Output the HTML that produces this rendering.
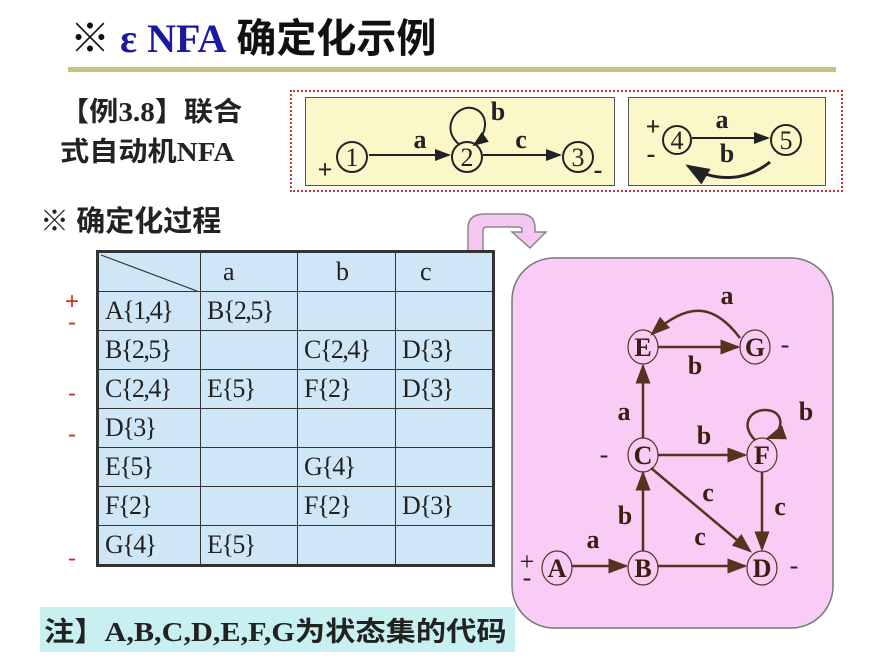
<!DOCTYPE html>
<html><head><meta charset="utf-8"><style>
body{margin:0;width:887px;height:669px;background:#fff;position:relative;overflow:hidden;font-family:"Liberation Serif","Noto Serif CJK SC",serif}
.a{position:absolute;white-space:nowrap}
.cj{font-family:"Liberation Serif","Noto Sans CJK SC",sans-serif;font-weight:bold}
table{position:absolute;left:96px;top:250px;border-collapse:collapse;table-layout:fixed;width:399px;background:#cfe6f7;border:3px solid #333}
td{border:1.5px solid #333;height:38px;padding:0 0 0 6px;font-size:26px;letter-spacing:-1.5px;color:#222;font-family:"Liberation Serif",serif;white-space:nowrap;overflow:hidden}
</style></head><body>
<div class="a cj" style="left:70px;top:6px;font-size:40px;color:#111">※ <span style="color:#1a1aa0;font-family:'Liberation Serif',serif">ε NFA</span> 确定化示例</div>
<div class="a" style="left:68px;top:67px;width:768px;height:5px;background:#c9c27e"></div>
<div class="a cj" style="left:60px;top:92px;font-size:27px;line-height:40px;color:#222;transform:scaleX(1.08);transform-origin:0 0">【例3.8】联合<br>式自动机NFA</div>
<div class="a" style="left:290px;top:90px;width:549px;height:98px;border:2px dotted #c33"></div>
<div class="a" style="left:305px;top:97px;width:308px;height:87px;background:#fbf7c8;border:1.5px solid #555"></div>
<div class="a" style="left:628px;top:97px;width:196px;height:87px;background:#fbf7c8;border:1.5px solid #555"></div>
<svg class="a" style="left:0;top:0" width="887" height="669">
<defs><marker id="m" markerWidth="8" markerHeight="8" refX="7" refY="4" orient="auto"><path d="M0,1L8,4L0,7z" fill="#222"/></marker>
<marker id="n" markerWidth="8" markerHeight="8" refX="7" refY="4" orient="auto"><path d="M0,1L8,4L0,7z" fill="#5a3020"/></marker></defs>
<g fill="none" stroke="#222" stroke-width="2" font-family="Liberation Serif" font-size="24">
<circle cx="352" cy="157" r="15"/><circle cx="467" cy="157" r="15"/><circle cx="578" cy="157" r="15"/>
<line x1="369" y1="155" x2="449" y2="155" marker-end="url(#m)"/>
<line x1="483" y1="155" x2="560" y2="155" marker-end="url(#m)"/>
<path d="M460,145 C440,130 455,105 472,108 C490,112 488,135 474,145" marker-end="url(#m)"/>
<circle cx="677" cy="140" r="14"/><circle cx="786" cy="140" r="15"/>
<line x1="692" y1="138" x2="768" y2="138" marker-end="url(#m)"/>
<path d="M770,162 C745,182 715,182 688,166" stroke-width="3" marker-end="url(#m)"/>
</g>
<g font-family="Liberation Serif" fill="#222" font-size="26" text-anchor="middle">
<text x="352" y="166">1</text><text x="467" y="166">2</text><text x="578" y="166">3</text>
<text x="677" y="149">4</text><text x="786" y="149">5</text>
<g font-weight="bold" font-size="26"><text x="420" y="148">a</text><text x="498" y="120">b</text><text x="521" y="148">c</text><text x="722" y="128">a</text><text x="727" y="162">b</text>
<text x="325" y="178">+</text><text x="598" y="178">-</text><text x="653" y="135">+</text><text x="651" y="162">-</text></g>
</g>
<path d="M468,252 L468,228 Q468,214 485,214 L520,214 Q535,214 535,228 L535,232 L546,232 L530,248 L512,232 L522,232 L522,230 Q522,227 518,227 L487,227 Q483,227 483,231 L483,252 Z" fill="#f4c6f0" stroke="#888" stroke-width="1.5"/>
<rect x="512" y="258" width="321" height="370" rx="42" fill="#f8ccf4" stroke="#777" stroke-width="1.5"/>
<g fill="none" stroke="#5a3020" stroke-width="2.5">
<line x1="658" y1="347" x2="738" y2="347" marker-end="url(#n)"/>
<path d="M740,338 C715,305 690,300 652,334" marker-end="url(#n)"/>
<line x1="643" y1="438" x2="643" y2="366" marker-end="url(#n)"/>
<line x1="658" y1="455" x2="745" y2="455" marker-end="url(#n)"/>
<line x1="651" y1="468" x2="750" y2="551" marker-end="url(#n)"/>
<line x1="762" y1="472" x2="762" y2="549" marker-end="url(#n)"/>
<line x1="643" y1="551" x2="643" y2="473" marker-end="url(#n)"/>
<line x1="572" y1="566" x2="626" y2="566" marker-end="url(#n)"/>
<line x1="658" y1="566" x2="745" y2="566" marker-end="url(#n)"/>
<path d="M755,440 C740,425 750,410 765,410 C785,410 785,432 768,438" marker-end="url(#n)"/>
</g>
<g fill="none" stroke="#5a3020" stroke-width="1.2">
<ellipse cx="643" cy="347" rx="15" ry="17"/><ellipse cx="755" cy="347" rx="15" ry="17"/>
<ellipse cx="643" cy="455" rx="15" ry="17"/><ellipse cx="762" cy="455" rx="15" ry="17"/>
<ellipse cx="557" cy="568" rx="15" ry="17"/><ellipse cx="643" cy="568" rx="15" ry="17"/><ellipse cx="762" cy="568" rx="15" ry="17"/>
</g>
<g font-family="Liberation Serif" font-weight="bold" fill="#3a2010" font-size="26" text-anchor="middle">
<text x="643" y="356">E</text><text x="755" y="356">G</text><text x="643" y="464">C</text><text x="762" y="464">F</text>
<text x="557" y="577">A</text><text x="643" y="577">B</text><text x="762" y="577">D</text>
<text x="727" y="304">a</text><text x="695" y="374">b</text><text x="624" y="420">a</text><text x="704" y="444">b</text><text x="806" y="420">b</text>
<text x="708" y="501">c</text><text x="780" y="515">c</text><text x="625" y="524">b</text><text x="593" y="548">a</text><text x="700" y="545">c</text>
<g font-weight="normal" fill="#222"><text x="527" y="570">+</text><text x="527" y="586">-</text><text x="785" y="353">-</text><text x="794" y="574">-</text><text x="604" y="463">-</text></g>
</g>
<g font-family="Liberation Sans" fill="#d03020" font-size="24" text-anchor="middle">
<text x="72" y="309">+</text><text x="72" y="330">-</text><text x="72" y="401">-</text><text x="72" y="442">-</text><text x="72" y="566">-</text>
</g>
</svg>
<div class="a cj" style="left:40px;top:198px;font-size:29px;color:#222">※ 确定化过程</div>
<table>
<colgroup><col style="width:103px"><col style="width:97px"><col style="width:98px"><col style="width:98px"></colgroup>
<tr><td style="padding:0"><svg width="103" height="38" style="display:block"><line x1="2" y1="2" x2="98" y2="38" stroke="#333" stroke-width="1.2"/></svg></td><td style="padding-left:22px">a</td><td style="padding-left:38px">b</td><td style="padding-left:24px">c</td></tr>
<tr><td>A{1,4}</td><td>B{2,5}</td><td></td><td></td></tr>
<tr><td>B{2,5}</td><td></td><td>C{2,4}</td><td>D{3}</td></tr>
<tr><td>C{2,4}</td><td>E{5}</td><td>F{2}</td><td>D{3}</td></tr>
<tr><td>D{3}</td><td></td><td></td><td></td></tr>
<tr><td>E{5}</td><td></td><td>G{4}</td><td></td></tr>
<tr><td>F{2}</td><td></td><td>F{2}</td><td>D{3}</td></tr>
<tr><td>G{4}</td><td>E{5}</td><td></td><td></td></tr>
</table>
<div class="a" style="left:40px;top:607px;width:475px;height:45px;background:#c8f0f0"></div>
<div class="a cj" style="left:44px;top:610px;font-size:27px;color:#222;transform:scaleX(1.12);transform-origin:0 0">注】A,B,C,D,E,F,G为状态集的代码</div>
</body></html>
